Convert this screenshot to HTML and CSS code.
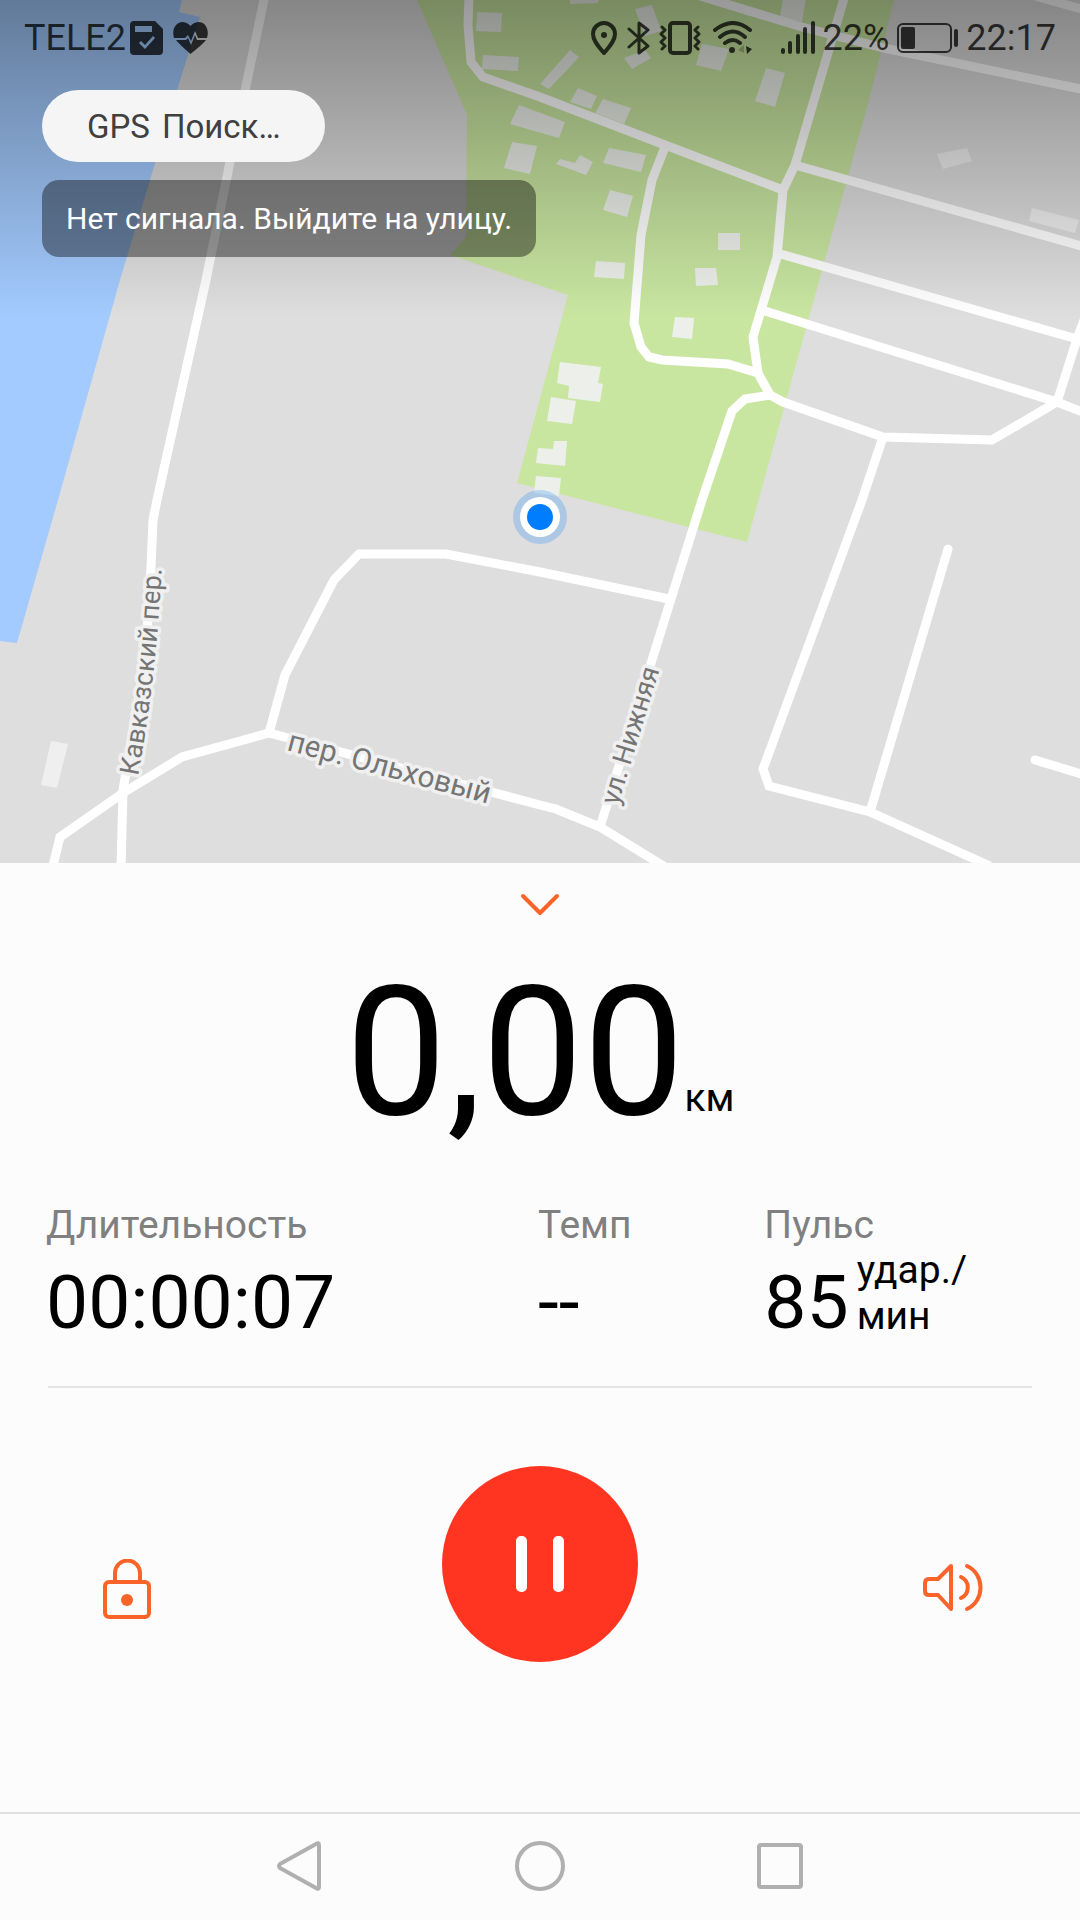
FILE: index.html
```html
<!DOCTYPE html>
<html lang="ru">
<head>
    <meta charset="UTF-8">
    <meta name="viewport" content="width=device-width, initial-scale=1.0">
    <title>Тренировка</title>
    <link rel="stylesheet" href="styles.css">
</head>
<body>
    <section class="map">
        <svg class="map-canvas" viewBox="0 0 1080 863">
            <defs>
                <linearGradient id="shade" x1="0" y1="0" x2="0" y2="1">
                    <stop offset="0" stop-color="#000" stop-opacity="0.4"/>
                    <stop offset="1" stop-color="#000" stop-opacity="0"/>
                </linearGradient>
                <path id="kavkazsky" d="M138 776 Q158 672 163 540"/>
                <path id="olkhovy" d="M286 750 L530 815"/>
                <path id="nizhnyaya" d="M618 806 L667 645"/>
            </defs>
            <rect width="1080" height="863" fill="#dedede"/>
            <path fill="#a3cbff" d="M0 0H182L179 12L200 17L177 90L120 280L58 500L17 643L0 641Z"/>
            <path fill="#c9e6a1" d="M417 0L467 115L466 237L450 255L568 295L517 483L747 542L869 100L894 0Z"/>
            <g fill="#edf0ea">
                <path d="M570 0H599L598 3L570 4ZM635 9L652 5L661 31L645 36ZM570 50L579 57L549 89L540 84Z"/>
                <path d="M578 88L597 96L591 109L570 102ZM603 99L631 108L624 124L595 113ZM783 -2H806L802 22L780 17Z"/>
                <path d="M624 58L645 50L651 58L632 69ZM702 44L729 49L721 71L696 65ZM766 68L785 73L775 107L755 101Z"/>
                <path d="M519 105L565 122L559 138L510 124ZM512 142L537 146L530 174L504 168Z"/>
                <path d="M477 12L502 13L501 32L476 31ZM483 55L519 57L518 71L482 69Z"/>
                <path d="M556 164L560 159L575 163L580 155L593 162L586 175ZM609 148L646 155L641 172L603 163Z"/>
                <path d="M610 190L633 196L627 217L603 210ZM718 233H740V250H718ZM596 261L625 263L624 279L594 277Z"/>
                <path d="M695 268H716L718 285L696 286ZM675 317L694 318L692 339L672 337Z"/>
                <path d="M560 362L601 367L598 383L603 384L600 402L568 398L569 386L557 383Z"/>
                <path d="M551 397L576 401L572 424L547 421ZM538 448L553 449L554 441H567L565 466L536 463ZM536 476L561 478L559 496L534 493Z"/>
            </g>
            <path fill="#efefef" d="M937 154L967 148L972 161L943 169ZM1032 208L1079 220L1075 233L1029 221ZM51 741L68 744L57 788L41 785Z"/>
            <g class="roads">
                <path d="M265 -5L230 162L206 280L157 500L153 520L150 590L145 660L123 790L121 870"/>
                <path d="M52 870L60 837L123 793L182 757L269 733L540 805L556 809L600 827L670 870"/>
                <path d="M269 733L285 675L334 580L359 554H446L540 572L669 599"/>
                <path d="M600 827L671 599L702 500L732 411L745 399L770 395"/>
                <path d="M845 -5L795 165L783 190L777 257L753 337L758 373L770 395L783 402L883 437L992 440L1057 402L1077 339L1084 320"/>
                <path d="M758 373L728 364L662 360L649 357L641 347L634 323L641 235L652 180L665 147"/>
                <path d="M469 -5L468 25L471 62L483 77L540 97L665 145L783 190"/>
                <path d="M700 -4L802 27L884 48L1085 90M1035 -4L1085 10"/>
                <path d="M795 165L1085 247M777 253L1077 339M765 311L1057 402L1085 413"/>
                <path d="M883 437L862 500L763 769L769 786L870 812L990 866"/>
                <path stroke-linecap="round" d="M870 812L948 549M1035 760L1088 776"/>
            </g>
            <rect width="1080" height="318" fill="url(#shade)"/>
            <g class="streets">
                <text font-size="27"><textPath href="#kavkazsky">Кавказский пер.</textPath></text>
                <text font-size="30"><textPath href="#olkhovy">пер. Ольховый</textPath></text>
                <text font-size="27"><textPath href="#nizhnyaya">ул. Нижняя</textPath></text>
            </g>
            <circle cx="540" cy="517" r="27" fill="#007dff" fill-opacity="0.22"/>
            <circle cx="540" cy="517" r="20" fill="#fff"/>
            <circle cx="540" cy="517" r="13" fill="#007dff"/>
        </svg>

        <div class="overlay">
            <header class="status">
                <div class="status-group">
                    <div class="carrier">
                        <span>TELE2</span>
                        <svg width="33" height="34" viewBox="0 0 33 34">
                            <path fill="currentColor" fill-rule="evenodd" d="M4 0H25L33 8V30Q33 34 29 34H4Q0 34 0 30V4Q0 0 4 0ZM5 5V11H22V5ZM9 22L15 28L25 17L23 15L15 24L11 20Z"/>
                        </svg>
                    </div>
                    <svg width="35" height="32" viewBox="0 0 35 32">
                        <path fill="currentColor" d="M1 16C-2 5 5 0 9 0Q14 0 17.500 4Q21 0 26 0C31 0 37 6 34 16H25L22 9L18 19L15 13L12 16ZM3 18H13L15 16L18 23L22 13L24 18H33Q30 22 17.500 32Q6 22 3 18Z"/>
                    </svg>
                </div>
                <div class="status-group">
                    <svg class="line" width="28" height="34" viewBox="0 0 28 34">
                        <path d="M13 32C8 26 2 20 2 13A11 11 0 0 1 24 13C24 20 18 26 13 32Z"/>
                        <circle cx="13" cy="14" r="3" fill="currentColor" stroke="none"/>
                    </svg>
                    <svg class="line" width="24" height="34" viewBox="0 0 24 34">
                        <path stroke-width="3" d="M2 8L21 25L12 32V2L21 9L2 26"/>
                    </svg>
                    <svg class="line" width="46" height="34" viewBox="0 0 46 34">
                        <rect x="11" y="2" width="20" height="30" rx="3"/>
                        <path stroke-width="3" d="M3 6L6 9L2 13L6 17L2 21L6 25L3 28M39 6L36 9L40 13L36 17L40 21L36 25L39 28"/>
                    </svg>
                    <svg class="line" width="60" height="34" viewBox="0 0 60 34">
                        <path d="M2 9Q20 -5 37 9M7 16Q20 5 32 16M12 22Q20 16 27 22"/>
                        <circle cx="19" cy="29" r="3" fill="currentColor" stroke="none"/>
                        <path fill="currentColor" stroke="none" opacity="0.3" d="M25 29L31 24V32Z"/>
                        <path fill="currentColor" stroke="none" d="M33 25L39 28L34 33Z"/>
                    </svg>
                    <svg class="line" width="34" height="34" viewBox="0 0 34 34">
                        <path d="M2 29V31M9 22V31M17 15V31M24 8V31M32 2V31"/>
                    </svg>
                    <span>22%</span>
                    <svg class="line" width="61" height="30" viewBox="0 0 61 30">
                        <rect x="1" y="1" width="53" height="28" rx="5" stroke-width="2"/>
                        <rect x="4" y="4" width="14" height="22" rx="2" fill="currentColor" stroke="none"/>
                        <path d="M59 8V22"/>
                    </svg>
                    <span>22:17</span>
                </div>
            </header>
            <div class="gps"><span>GPS</span><span>Поиск…</span></div>
            <p class="hint">Нет сигнала. Выйдите на улицу.</p>
        </div>
    </section>

    <main class="panel">
        <button class="icon-btn collapse" aria-label="Свернуть">
            <svg width="40" height="24" viewBox="0 0 40 24">
                <path d="M3 3L20 20L37 3"/>
            </svg>
        </button>

        <div class="distance">
            <span class="distance-value">0,00</span>
            <span class="unit">км</span>
        </div>

        <dl class="stats">
            <div>
                <dt>Длительность</dt>
                <dd>00:00:07</dd>
            </div>
            <div>
                <dt>Темп</dt>
                <dd>--</dd>
            </div>
            <div>
                <dt>Пульс</dt>
                <dd>85 <span class="unit">удар./<br>мин</span></dd>
            </div>
        </dl>
        <hr>

        <div class="controls">
            <button class="icon-btn side" aria-label="Заблокировать">
                <svg width="60" height="60" viewBox="0 0 60 60">
                    <rect x="8" y="23" width="44" height="35" rx="4"/>
                    <path d="M18 22V14A12 12 0 0 1 43 14V22"/>
                    <circle cx="30" cy="41" r="6" fill="currentColor" stroke="none"/>
                </svg>
            </button>
            <button class="pause" aria-label="Пауза">
                <svg width="48" height="56" viewBox="0 0 48 56">
                    <rect width="11" height="56" rx="5"/>
                    <rect x="37" width="11" height="56" rx="5"/>
                </svg>
            </button>
            <button class="icon-btn side" aria-label="Звук">
                <svg width="60" height="60" viewBox="0 0 60 60">
                    <path d="M28 7L15 20H6Q2 20 2 24V32Q2 36 6 36H15L28 50Z"/>
                    <path d="M38 18C47 22 47 35 38 39M44 7C62 15 62 42 44 50"/>
                </svg>
            </button>
        </div>
    </main>

    <nav class="navbar">
        <button class="nav-btn" aria-label="Назад">
            <svg width="50" height="50" viewBox="0 0 50 50"><path d="M5 23Q3 25 5 27L41 47Q44 49 44 46V4Q44 1 41 3Z"/></svg>
        </button>
        <button class="nav-btn" aria-label="Домой">
            <svg width="50" height="50" viewBox="0 0 50 50"><circle cx="25" cy="25" r="23"/></svg>
        </button>
        <button class="nav-btn" aria-label="Недавние">
            <svg width="50" height="50" viewBox="0 0 50 50"><rect x="4" y="4" width="42" height="42" rx="2"/></svg>
        </button>
    </nav>
</body>
</html>
```

FILE: styles.css
```css
* {
    box-sizing: border-box;
}
body {
    margin: 0;
    min-height: 100vh;
    display: flex;
    flex-direction: column;
    background-color: #fcfcfc;
    color: #000;
    font-family: Roboto, "Noto Sans", sans-serif;
}
svg {
    display: block;
    flex-shrink: 0;
}
button {
    padding: 0;
    border: none;
    background: none;
    cursor: pointer;
}

/* Map */
.map {
    position: relative;
}
.map-canvas {
    width: 100%;
    height: auto;
}
.roads {
    fill: none;
    stroke: #fff;
    stroke-width: 9;
}
.streets {
    fill: #757575;
    stroke: #f0f0f0;
    stroke-width: 7;
    stroke-linejoin: round;
    paint-order: stroke;
}
.overlay {
    position: absolute;
    top: 0;
    left: 0;
    right: 0;
    display: flex;
    flex-direction: column;
    align-items: flex-start;
}
.status {
    width: 100%;
    height: 75px;
    margin-bottom: 15px;
    padding: 0 24px;
    display: flex;
    align-items: center;
    justify-content: space-between;
    color: rgba(0, 0, 0, 0.75);
    font-size: 36px;
}
.status-group {
    display: flex;
    align-items: center;
    gap: 8px;
}
.carrier {
    display: flex;
    align-items: center;
    gap: 4px;
    margin-right: 2px;
}
.line {
    fill: none;
    stroke: currentColor;
    stroke-width: 4;
    stroke-linecap: round;
    stroke-linejoin: round;
}
.gps {
    height: 72px;
    margin-left: 42px;
    padding: 0 45px;
    display: flex;
    align-items: center;
    gap: 12px;
    border-radius: 36px;
    background-color: #f5f5f5;
    color: #404040;
    font-size: 33px;
}
.hint {
    margin: 18px 0 0 42px;
    padding: 21px 24px;
    border-radius: 17px;
    background-color: rgba(0, 0, 0, 0.4);
    color: #fff;
    font-size: 30px;
    line-height: 35px;
}

/* Workout panel */
.panel {
    flex: 1;
    padding: 0 48px;
    display: flex;
    flex-direction: column;
}
.icon-btn {
    color: #fa6428;
}
.icon-btn svg {
    fill: none;
    stroke: currentColor;
    stroke-width: 4;
    stroke-linecap: round;
    stroke-linejoin: round;
}
.collapse {
    align-self: center;
    padding: 30px 20px;
}
.distance {
    display: flex;
    justify-content: center;
    align-items: flex-end;
}
.distance-value {
    font-size: 180px;
    line-height: 212px;
}
.unit {
    font-size: 39px;
    line-height: 46px;
}
.distance .unit {
    margin-bottom: 38px;
}
.stats {
    margin: 44px 2px 0 -2px;
    display: grid;
    grid-template-columns: 50% 23% 27%;
}
.stats dt {
    color: #808080;
    font-size: 39px;
    line-height: 44px;
}
.stats dd {
    height: 101px;
    margin: 0;
    display: flex;
    align-items: flex-end;
    gap: 8px;
    font-size: 75px;
    line-height: 92px;
}
.stats .unit {
    align-self: flex-start;
}
hr {
    width: 100%;
    margin: 38px 0 0;
    border: none;
    border-top: 2px solid #e4e4e4;
}
.controls {
    margin-top: 78px;
    padding: 0 49px;
    display: flex;
    align-items: flex-end;
    justify-content: space-between;
}
.side {
    margin-bottom: 43px;
}
.pause {
    width: 196px;
    height: 196px;
    display: flex;
    align-items: center;
    justify-content: center;
    border-radius: 50%;
    background-color: #ff3522;
}
.pause svg {
    fill: #fff;
}

/* System navigation */
.navbar {
    height: 108px;
    padding-bottom: 2px;
    display: flex;
    align-items: center;
    justify-content: center;
    gap: 190px;
    border-top: 2px solid #e0e0e0;
}
.nav-btn svg {
    fill: none;
    stroke: #b0b0b0;
    stroke-width: 4;
    stroke-linejoin: round;
}
```
